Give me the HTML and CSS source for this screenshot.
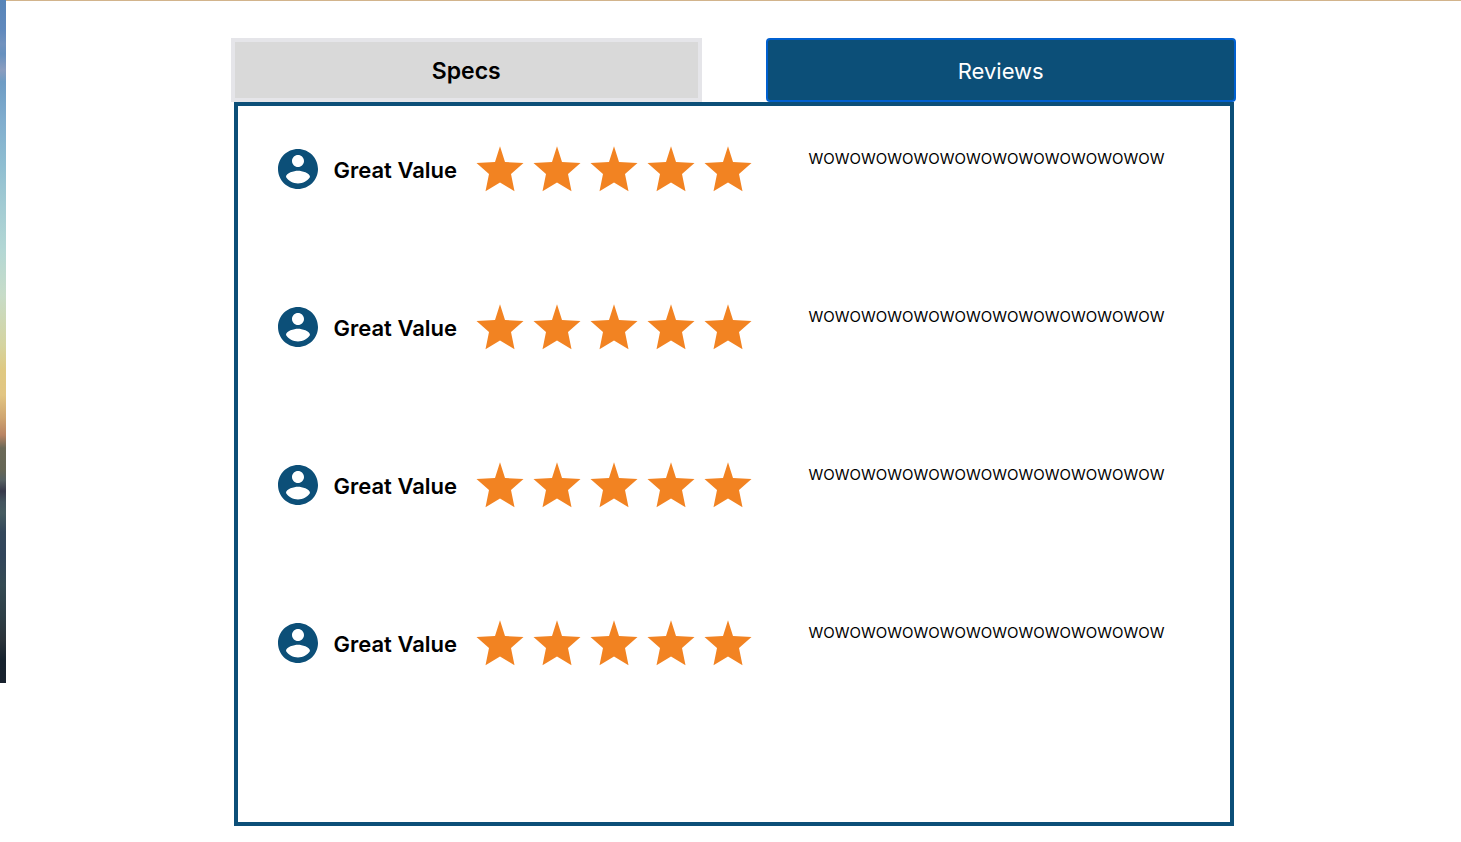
FILE: index.html
```html
<!DOCTYPE html>
<html lang="en">
<head>
<meta charset="utf-8">
<title>Reviews</title>
<link rel="stylesheet" href="styles.css">
</head>
<body>
<svg class="sprite" aria-hidden="true">
  <symbol id="user" viewBox="2 2 20 20"><path d="M12 2C6.480 2 2 6.480 2 12s4.480 10 10 10 10-4.480 10-10S17.520 2 12 2zm0 3c1.660 0 3 1.340 3 3s-1.340 3-3 3-3-1.340-3-3 1.340-3 3-3zm0 14.200c-2.500 0-4.710-1.280-6-3.220.03-1.990 4-3.080 6-3.080 1.990 0 5.970 1.090 6 3.080-1.290 1.940-3.500 3.220-6 3.220z"/></symbol>
  <symbol id="star" viewBox="0 0 48 48"><path d="M24 1.300 29 17 47.500 18 35 29 38.500 46.300 24 37.500 9.500 46.300 13 29 .5 18 19 17z"/></symbol>
</svg>
<div class="page">
  <div class="scenery"></div>
  <main class="content">
    <div class="tabs" role="tablist">
      <button class="tab" role="tab" aria-selected="false">Specs</button>
      <button class="tab tab-active" role="tab" aria-selected="true">Reviews</button>
    </div>
    <section class="panel" role="tabpanel">
      <article class="review">
        <svg class="avatar"><use href="#user"/></svg>
        <h2 class="title">Great Value</h2>
        <div class="stars" role="img" aria-label="5 stars"><svg class="star"><use href="#star"/></svg><svg class="star"><use href="#star"/></svg><svg class="star"><use href="#star"/></svg><svg class="star"><use href="#star"/></svg><svg class="star"><use href="#star"/></svg></div>
        <p class="text">WOWOWOWOWOWOWOWOWOWOWOWOWOW</p>
      </article>
      <article class="review">
        <svg class="avatar"><use href="#user"/></svg>
        <h2 class="title">Great Value</h2>
        <div class="stars" role="img" aria-label="5 stars"><svg class="star"><use href="#star"/></svg><svg class="star"><use href="#star"/></svg><svg class="star"><use href="#star"/></svg><svg class="star"><use href="#star"/></svg><svg class="star"><use href="#star"/></svg></div>
        <p class="text">WOWOWOWOWOWOWOWOWOWOWOWOWOW</p>
      </article>
      <article class="review">
        <svg class="avatar"><use href="#user"/></svg>
        <h2 class="title">Great Value</h2>
        <div class="stars" role="img" aria-label="5 stars"><svg class="star"><use href="#star"/></svg><svg class="star"><use href="#star"/></svg><svg class="star"><use href="#star"/></svg><svg class="star"><use href="#star"/></svg><svg class="star"><use href="#star"/></svg></div>
        <p class="text">WOWOWOWOWOWOWOWOWOWOWOWOWOW</p>
      </article>
      <article class="review">
        <svg class="avatar"><use href="#user"/></svg>
        <h2 class="title">Great Value</h2>
        <div class="stars" role="img" aria-label="5 stars"><svg class="star"><use href="#star"/></svg><svg class="star"><use href="#star"/></svg><svg class="star"><use href="#star"/></svg><svg class="star"><use href="#star"/></svg><svg class="star"><use href="#star"/></svg></div>
        <p class="text">WOWOWOWOWOWOWOWOWOWOWOWOWOW</p>
      </article>
    </section>
  </main>
</div>
</body>
</html>
```
FILE: styles.css
```css
* { box-sizing: border-box; }
body { margin: 0; background: #fff; color: #000; font-family: Inter, "Liberation Sans", sans-serif; }
.sprite { position: absolute; width: 0; height: 0; }
.page { display: flex; align-items: flex-start; }
.scenery {
  flex: none;
  width: 6px;
  height: 683px;
  background: linear-gradient(#5885b8 0, #6089bd 30px, #7192be 44px, #6690be 54px, #8b9dbf 70px, #6e9cc4 82px, #80adce 120px, #8fbed1 165px, #a2cbd3 205px, #b3d7d4 250px, #c7dcc8 295px, #d5d4a0 345px, #dfc982 370px, #e2c582 395px, #cfa570 418px, #b98463 435px, #6b6957 448px, #656655 470px, #566162 480px, #37394a 491px, #43545e 502px, #455b60 513px, #33475a 532px, #31445a 555px, #344a52 585px, #2e3f47 615px, #2b333a 640px, #16222e 660px, #18212e 683px);
}
.content { flex: 1; border-top: 1px solid #d2b48c; padding: 37px 16px 16px; }
.tabs { display: grid; grid-template-columns: 1fr 1fr; gap: 64px; max-width: 1005px; margin: 0 auto; }
.tab {
  height: 64px;
  padding: 2px 0 0;
  border: 4px solid #e5e5e9;
  background: #d9d9d9;
  color: #000;
  font: 600 23px/32px Inter, "Liberation Sans", sans-serif;
}
.tab-active { border: 2px solid #0060d0; border-radius: 4px; background: #0c4f78; color: #fff; font-size: 22px; font-weight: 400; }
.panel { max-width: 1000px; margin: 0 auto; border: 4px solid #0c4f78; padding: 39px 40px 45px; }
.review { display: grid; grid-template-columns: 40px 126px 276px 1fr; column-gap: 16px; align-items: start; height: 158px; }
.avatar { width: 40px; height: 40px; margin-top: 4px; fill: #0c4f78; }
.title { margin: 0; font-size: 22px; font-weight: 600; line-height: 50px; white-space: nowrap; }
.stars { display: flex; gap: 9px; }
.star { flex: none; width: 48px; height: 48px; fill: #f28322; }
.text { margin: 0 0 0 41px; font-size: 15px; line-height: 28px; }
```
